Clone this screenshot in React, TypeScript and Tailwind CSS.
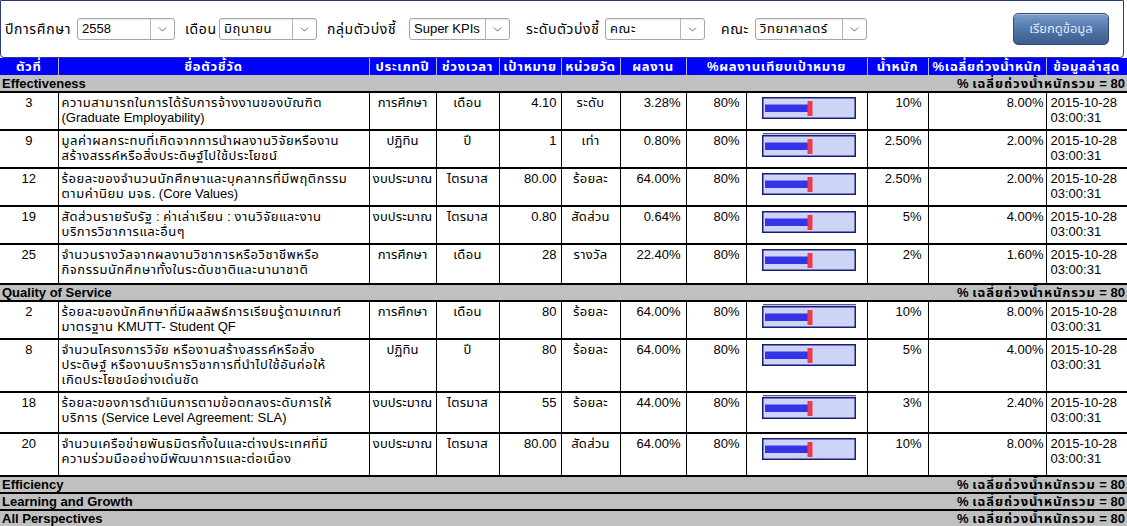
import { ChevronDown } from "lucide-react";

type Kpi = {
  no: string;
  name: string[];
  yearType: string;
  period: string;
  target: string;
  unit: string;
  result: string;
  pct: string;
  weight: string;
  weighted: string;
  h: string;
  dbl?: boolean;
};

const effectiveness: Kpi[] = [
  { no: "3", name: ["ความสามารถในการได้รับการจ้างงานของบัณฑิต", "(Graduate Employability)"], yearType: "การศึกษา", period: "เดือน", target: "4.10", unit: "ระดับ", result: "3.28%", pct: "80%", weight: "10%", weighted: "8.00%", h: "h-[38px]" },
  { no: "9", name: ["มูลค่าผลกระทบที่เกิดจากการนำผลงานวิจัยหรืองาน", "สร้างสรรค์หรือสิ่งประดิษฐ์ไปใช้ประโยชน์"], yearType: "ปฏิทิน", period: "ปี", target: "1", unit: "เท่า", result: "0.80%", pct: "80%", weight: "2.50%", weighted: "2.00%", h: "h-[38px]", dbl: true },
  { no: "12", name: ["ร้อยละของจำนวนนักศึกษาและบุคลากรที่มีพฤติกรรม", "ตามค่านิยม มจธ. (Core Values)"], yearType: "งบประมาณ", period: "ไตรมาส", target: "80.00", unit: "ร้อยละ", result: "64.00%", pct: "80%", weight: "2.50%", weighted: "2.00%", h: "h-[38px]" },
  { no: "19", name: ["สัดส่วนรายรับรัฐ : ค่าเล่าเรียน : งานวิจัยและงาน", "บริการวิชาการและอื่นๆ"], yearType: "งบประมาณ", period: "ไตรมาส", target: "0.80", unit: "สัดส่วน", result: "0.64%", pct: "80%", weight: "5%", weighted: "4.00%", h: "h-[38px]" },
  { no: "25", name: ["จำนวนรางวัลจากผลงานวิชาการหรือวิชาชีพหรือ", "กิจกรรมนักศึกษาทั้งในระดับชาติและนานาชาติ"], yearType: "การศึกษา", period: "เดือน", target: "28", unit: "รางวัล", result: "22.40%", pct: "80%", weight: "2%", weighted: "1.60%", h: "h-[40px]" },
];

const quality: Kpi[] = [
  { no: "2", name: ["ร้อยละของนักศึกษาที่มีผลลัพธ์การเรียนรู้ตามเกณฑ์", "มาตรฐาน KMUTT- Student QF"], yearType: "การศึกษา", period: "เดือน", target: "80", unit: "ร้อยละ", result: "64.00%", pct: "80%", weight: "10%", weighted: "8.00%", h: "h-[38px]", dbl: true },
  { no: "8", name: ["จำนวนโครงการวิจัย หรืองานสร้างสรรค์หรือสิ่ง", "ประดิษฐ์ หรืองานบริการวิชาการที่นำไปใช้อันก่อให้", "เกิดประโยชน์อย่างเด่นชัด"], yearType: "ปฏิทิน", period: "ปี", target: "80", unit: "ร้อยละ", result: "64.00%", pct: "80%", weight: "5%", weighted: "4.00%", h: "h-[53px]" },
  { no: "18", name: ["ร้อยละของการดำเนินการตามข้อตกลงระดับการให้", "บริการ (Service Level Agreement: SLA)"], yearType: "งบประมาณ", period: "ไตรมาส", target: "55", unit: "ร้อยละ", result: "44.00%", pct: "80%", weight: "3%", weighted: "2.40%", h: "h-[41px]", dbl: true },
  { no: "20", name: ["จำนวนเครือข่ายพันธมิตรทั้งในและต่างประเทศที่มี", "ความร่วมมืออย่างมีพัฒนาการและต่อเนื่อง"], yearType: "งบประมาณ", period: "ไตรมาส", target: "80.00", unit: "สัดส่วน", result: "64.00%", pct: "80%", weight: "10%", weighted: "8.00%", h: "h-[43px]" },
];

// Thai runs are set a little wider than the fallback font gives, as in the original Tahoma rendering
function T({ text, wide }: { text: string; wide?: boolean }) {
  return (
    <>
      {text.split(/([\u0E00-\u0E7F]+)/).map((part, i) =>
        /[\u0E00-\u0E7F]/.test(part) ? (
          <span key={i} className={wide ? "tracking-[0.9px]" : "tracking-[0.55px]"}>
            {part}
          </span>
        ) : (
          <span key={i}>{part}</span>
        )
      )}
    </>
  );
}

function Select({ value, width }: { value: string; width: string }) {
  return (
    <div className={`${width} h-[22px] flex items-stretch border border-[#a6a6a6] rounded-[3px] bg-white shadow-[inset_0_1px_1px_rgba(0,0,0,0.08)]`}>
      <span className="flex-1 pl-[4px] text-[13px] leading-[20px] text-black whitespace-nowrap overflow-hidden">
        <T text={value} />
      </span>
      <span className="w-[24px] flex items-center justify-center border-l border-[#b5b5b5]">
        <ChevronDown size={13} strokeWidth={1.6} className="text-[#555]" />
      </span>
    </div>
  );
}

function Bullet({ dbl }: { dbl?: boolean }) {
  return (
    <svg width="95" height="25" viewBox="0 0 95 25" className="block">
      {dbl && <line x1="1" y1="0.75" x2="94" y2="0.75" stroke="#1a1a78" strokeWidth="1.2" />}
      <rect x="0.75" y="2.75" width="92.5" height="20.5" fill="#cdd5f6" stroke="#1a1a78" strokeWidth="1.5" />
      <rect x="3" y="9.5" width="45" height="7.5" fill="#3434e6" />
      <rect x="45.5" y="6" width="5" height="15" fill="#f03a4c" />
    </svg>
  );
}

function Section({ title }: { title: string }) {
  return (
    <tr className="h-[17px] bg-[#c0c0c0]">
      <td colSpan={12} className="border-b-2 border-black px-[2px] p-0">
        <div className="flex justify-between items-center text-[13px] leading-[15px] font-bold text-black">
          <span>{title}</span>
          <span>
            <T text="% เฉลี่ยถ่วงน้ำหนักรวม = 80" wide />
          </span>
        </div>
      </td>
    </tr>
  );
}

function Row({ k }: { k: Kpi }) {
  const td = "border-b-2 border-r border-black align-top p-0 pt-[2px] text-[13px] leading-[15px] text-black";
  return (
    <tr className={k.h}>
      <td className={`${td} text-center`}>{k.no}</td>
      <td className={`${td} pl-[3px]`}>
        {k.name.map((l) => (
          <div key={l} className="whitespace-nowrap overflow-hidden">
            <T text={l} />
          </div>
        ))}
      </td>
      <td className={`${td} text-center tracking-[0.1px]`}>{k.yearType}</td>
      <td className={`${td} text-center tracking-[0.3px]`}>{k.period}</td>
      <td className={`${td} text-right pr-[4px]`}>{k.target}</td>
      <td className={`${td} text-center tracking-[0.3px]`}>{k.unit}</td>
      <td className={`${td} text-right pr-[5px]`}>{k.result}</td>
      <td className={`${td} text-right pr-[6px]`}>{k.pct}</td>
      <td className={`${td} pl-[15px]`}>
        <Bullet dbl={k.dbl} />
      </td>
      <td className={`${td} text-right pr-[6px]`}>{k.weight}</td>
      <td className={`${td} text-right pr-[2px]`}>{k.weighted}</td>
      <td className={`${td} pl-[4px]`}>
        <div>2015-10-28</div>
        <div>03:00:31</div>
      </td>
    </tr>
  );
}

const headers: [string, number][] = [
  ["ตัวที่", 1],
  ["ชื่อตัวชี้วัด", 1],
  ["ประเภทปี", 1],
  ["ช่วงเวลา", 1],
  ["เป้าหมาย", 1],
  ["หน่วยวัด", 1],
  ["ผลงาน", 1],
  ["%ผลงานเทียบเป้าหมาย", 2],
  ["น้ำหนัก", 1],
  ["%เฉลี่ยถ่วงน้ำหนัก", 1],
  ["ข้อมูลล่าสุด", 1],
];

export default function App() {
  return (
    <div className="w-[1127px] h-[526px] overflow-hidden bg-white font-['Liberation_Sans',Tahoma,'Noto_Sans_Thai',sans-serif]">
      {/* Filter bar */}
      <div className="h-[58px] w-[1124px] border-[1.5px] border-[#2c3b80] rounded-b-[4px] flex items-center pl-[4px] pr-[14px] text-[14px] text-black">
        <span className="w-[72px] whitespace-nowrap tracking-[0.6px]">ปีการศึกษา</span>
        <Select value="2558" width="w-[98px]" />
        <span className="ml-[10px] w-[34px] whitespace-nowrap tracking-[0.6px]">เดือน</span>
        <Select value="มิถุนายน" width="w-[98px]" />
        <span className="ml-[10px] w-[82px] whitespace-nowrap tracking-[0.6px]">กลุ่มตัวบ่งชี้</span>
        <Select value="Super KPIs" width="w-[101px]" />
        <span className="ml-[16px] w-[79px] whitespace-nowrap tracking-[0.6px]">ระดับตัวบ่งชี้</span>
        <Select value="คณะ" width="w-[100px]" />
        <span className="ml-[16px] w-[34px] whitespace-nowrap tracking-[0.6px]">คณะ</span>
        <Select value="วิทยาศาสตร์" width="w-[112px]" />
        <button className="ml-auto w-[96px] h-[32px] rounded-[5px] border border-[#2d4a78] bg-gradient-to-b from-[#7d9cc8] via-[#5276aa] to-[#3b5d8e] text-[#dfe8f5] text-[13px] shadow-[inset_0_1px_0_rgba(255,255,255,0.35)]">
          เรียกดูข้อมูล
        </button>
      </div>

      {/* KPI table */}
      <table className="table-fixed border-collapse w-[1127px]">
        <colgroup>
          <col className="w-[58px]" />
          <col className="w-[311px]" />
          <col className="w-[67px]" />
          <col className="w-[63px]" />
          <col className="w-[62px]" />
          <col className="w-[59px]" />
          <col className="w-[66px]" />
          <col className="w-[60px]" />
          <col className="w-[121px]" />
          <col className="w-[61px]" />
          <col className="w-[118px]" />
          <col className="w-[81px]" />
        </colgroup>
        <thead>
          <tr className="h-[17px] bg-[#0000ff]">
            {headers.map(([h, span]) => (
              <th
                key={h}
                colSpan={span}
                className="p-0 border-r border-[#b8b8d8] text-center text-[13px] leading-[15px] font-bold text-white whitespace-nowrap tracking-[0.7px]"
              >
                {h}
              </th>
            ))}
          </tr>
        </thead>
        <tbody>
          <Section title="Effectiveness" />
          {effectiveness.map((k) => (
            <Row key={k.no} k={k} />
          ))}
          <Section title="Quality of Service" />
          {quality.map((k) => (
            <Row key={k.no} k={k} />
          ))}
          <Section title="Efficiency" />
          <Section title="Learning and Growth" />
          <Section title="All Perspectives" />
        </tbody>
      </table>
    </div>
  );
}
